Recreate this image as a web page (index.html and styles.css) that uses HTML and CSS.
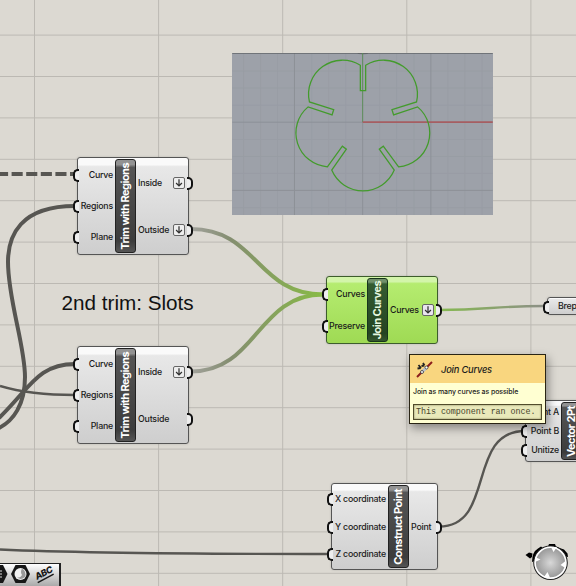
FILE: index.html
```html
<!DOCTYPE html>
<html lang="en">
<head>
<meta charset="utf-8">
<title>Join Curves</title>
<link rel="stylesheet" href="styles.css">
</head>
<body>
<main class="canvas">
  <svg class="layer" viewBox="0 0 576 586">
    <defs>
      <pattern id="grid" x="34" y="34.600" width="124.1" height="41.4" patternUnits="userSpaceOnUse">
        <path class="grid-line" d="M.5 0V41.4M0 .5H124.1"/>
      </pattern>
      <linearGradient id="toGreen"><stop offset="0" stop-color="#a2a29c"/><stop offset=".3" stop-color="#848e70"/><stop offset="1" stop-color="#88bb45"/></linearGradient>
      <linearGradient id="fromGreen"><stop offset="0" stop-color="#86b951"/><stop offset="1" stop-color="#8d8f87"/></linearGradient>
    </defs>
    <rect width="576" height="586" fill="url(#grid)"/>
    <g class="wires">
      <path class="thick dash" d="M-3 174H74"/>
      <path class="thick" d="M75 206C20 206 8 236 8 262C8 300 25 345 25 377C25 405 13 421 -1 428"/>
      <path class="thick" d="M75 364C38 364 30 388 -1 418"/>
      <path class="mid" d="M0 386Q30 395 75 395"/>
      <path class="thick" stroke="url(#toGreen)" d="M191 229C257 229 257 294.500 323 294.500"/>
      <path class="thick" stroke="url(#toGreen)" d="M191 371.500C257 371.500 257 294.500 323 294.500"/>
      <path class="mid" stroke="url(#fromGreen)" d="M439 310C490 310 492 306 545 306"/>
      <path class="mid" d="M439 526.500C496 526.500 466 431 525 431"/>
      <path class="mid" d="M0 549.500Q100 554 330 554"/>
    </g>
  </svg>

  <svg class="preview" viewBox="20 23 783 487">
    <path class="minor" d="M54 23V510M105 23V510M156 23V510M259 23V510M310 23V510M361 23V510M463 23V510M514 23V510M566 23V510M668 23V510M719 23V510M771 23V510M20 77H803M20 128H803M20 180H803M20 283H803M20 334H803M20 385H803M20 488H803"/>
    <path class="major" d="M207 23V510M412 231V510M617 23V510M20 231H412M20 436H803"/>
    <path class="edge" d="M20 23H803M386 21Q412 29 439 21"/>
    <path class="axis-y" d="M412 23V231"/>
    <path class="axis-x" d="M412 231H803"/>
    <path class="flower" d="M421 60A102 102 0 0 1 574 170L500 193L505 209L577 185A102 102 0 0 1 520 365L474 303L462 312L507 375A102 102 0 0 1 319 375L363 312L351 303L306 365A102 102 0 0 1 248 185L320 209L325 193L252 170A102 102 0 0 1 405 60V136H421Z"/>
  </svg>

  <h1 class="note">2nd trim: Slots</h1>

  <section class="node trim trim-a">
    <ul class="inputs"><li>Curve</li><li>Regions</li><li>Plane</li></ul>
    <div class="name"><b>Trim with Regions</b></div>
    <ul class="outputs">
      <li>Inside<svg class="down" viewBox="0 0 12 12"><path d="M6 1.500V9.500M2.500 6L6 9.500L9.500 6"/></svg></li>
      <li>Outside<svg class="down" viewBox="0 0 12 12"><path d="M6 1.500V9.500M2.500 6L6 9.500L9.500 6"/></svg></li>
    </ul>
  </section>

  <section class="node trim trim-b">
    <ul class="inputs"><li>Curve</li><li>Regions</li><li>Plane</li></ul>
    <div class="name"><b>Trim with Regions</b></div>
    <ul class="outputs">
      <li>Inside<svg class="down" viewBox="0 0 12 12"><path d="M6 1.500V9.500M2.500 6L6 9.500L9.500 6"/></svg></li>
      <li>Outside</li>
    </ul>
  </section>

  <section class="node join">
    <ul class="inputs"><li>Curves</li><li>Preserve</li></ul>
    <div class="name"><b>Join Curves</b></div>
    <ul class="outputs">
      <li>Curves<svg class="down" viewBox="0 0 12 12"><path d="M6 1.500V9.500M2.500 6L6 9.500L9.500 6"/></svg></li>
    </ul>
  </section>

  <section class="node construct">
    <ul class="inputs"><li>X coordinate</li><li>Y coordinate</li><li>Z coordinate</li></ul>
    <div class="name"><b>Construct Point</b></div>
    <ul class="outputs"><li>Point</li></ul>
  </section>

  <section class="node vector">
    <ul class="inputs"><li>Point A</li><li>Point B</li><li>Unitize</li></ul>
    <div class="name"><b>Vector 2Pt</b></div>
  </section>

  <section class="node brep"><ul class="inputs"><li>Brep</li></ul></section>

  <aside class="tooltip">
    <header>
      <svg class="tip-icon" viewBox="0 0 17 17">
        <path d="M1 16L16 1" stroke="#8c1c1c" stroke-width="2"/>
        <path d="M5.500 11.500L11 6" stroke="#b9c4ce" stroke-width="3"/>
        <circle cx="6" cy="11" r="1.500"/><circle cx="10.500" cy="6.500" r="1.500"/>
        <path d="M2.500 4L5 7M1.500 7.500L5 7M7 2L8.500 4.500M5.500 5L8.500 4.500" stroke="#222" stroke-width="1.800"/>
      </svg>
      <em>Join Curves</em>
    </header>
    <p>Join as many curves as possible</p>
    <code>This component ran once.</code>
  </aside>

  <footer class="toolbar">
    <svg viewBox="0 0 60 22">
      <path d="M-8 10L-4 1H3L7.500 10L3 19H-4Z" fill="#171717"/><path d="M0 7H2M0 10H2M0 13H2" stroke="#ddd"/>
      <path d="M11 10L15.500 1H25.500L30 10L25.500 19H15.500Z" fill="#171717"/>
      <circle cx="20.500" cy="10" r="6" fill="#f0f0f0"/><path d="M16.500 12.500Q20 15 22 11Q20 8 22 4.500Q27 8 25 13Q20 17 16.500 12.500Z" fill="#999"/>
      <g transform="rotate(-28 44 9)"><text class="abc" x="34.500" y="12">ABC</text><path d="M34 14.500H52" stroke="#171717" stroke-width="1.500"/></g>
    </svg>
  </footer>

  <svg class="dial" viewBox="0 0 52 44">
    <defs><radialGradient id="knob"><stop offset="0" stop-color="#d8d8d8"/><stop offset="1" stop-color="#919191"/></radialGradient></defs>
    <path d="M1.500 13L5 10.500L8.500 11.500L8 15L6 16.500Z"/>
    <path d="M8 20Q8 10 14 6.500L17 4.500L19 6L24 4.500L25 2L31 2L32 4.500L37 6.500L40 7.500L43.500 11.500L44 15L26 12Z"/>
    <circle cx="26.500" cy="20.700" r="16.700" fill="url(#knob)" stroke="#222" stroke-width="1.200"/>
    <circle cx="26.500" cy="20.700" r="15.400" fill="none" stroke="#fff" stroke-width="1.600"/>
    <path d="M27 5H33L29.500 10ZM41.500 19V26L36.500 23ZM20 35L23.500 30L26 35.500ZM11 15L16.500 17.500L11 20Z" fill="#fff"/>
  </svg>
</main>
</body>
</html>
```
FILE: styles.css
```css
* { box-sizing: border-box; }
body { margin: 0; font-family: Inter, "Liberation Sans", sans-serif; color: #1b1b1b; }
ul { list-style: none; margin: 0; padding: 0; }
.canvas { position: relative; width: 576px; height: 586px; overflow: hidden; background: #dcd9d2; }
.layer { position: absolute; left: 0; top: 0; width: 576px; height: 586px; }
.grid-line { stroke: #bcb9b3; stroke-width: 1; }
.wires path { fill: none; }
.wires path:not([stroke]) { stroke: #575652; }
.thick { stroke-width: 4; }
.mid { stroke-width: 2.4; }
.dash { stroke-dasharray: 11.1 3.5; }

.preview { position: absolute; left: 232px; top: 53px; width: 261px; height: 162px; background: #9da1a9; }
.preview path { fill: none; stroke-width: 3; }
.preview .minor { stroke: #999da5; }
.preview .major { stroke: #8d9198; }
.preview .edge { stroke: #62666a; stroke-width: 4; }
.preview .axis-y { stroke: #5c8c58; }
.preview .axis-x { stroke: #a65e62; stroke-width: 5; }
.preview .flower { stroke: #439b2c; stroke-width: 3.8; }

.note { position: absolute; left: 61.5px; top: 291px; margin: 0; font: 20.7px/24px "Liberation Sans", sans-serif; white-space: nowrap; color: #111; }

.node { position: absolute; display: flex; padding: 1px 3px; border: 1px solid #555; border-radius: 3px; background: linear-gradient(#fafafa 0 7%, #e8e8e8 9%, #cecece); box-shadow: 0 0 2px #77777766; font-size: 8.8px; font-weight: 500; line-height: 12px; }
.node ul { display: flex; flex-direction: column; }
.node li { position: relative; flex: 1; display: flex; align-items: center; white-space: nowrap; letter-spacing: -.2px; }
.inputs { flex: none; }
.inputs li { justify-content: flex-end; }
.outputs { flex: 1; padding-left: 2px; }
.outputs li { justify-content: space-between; }
.node li::before { content: ""; position: absolute; top: calc(50% - 6px); width: 4px; height: 9px; border: 2px solid #111; background: #eee; }
.node .inputs li::before { left: -8px; border-right: 0; border-radius: 5px 0 0 5px; }
.node .outputs li::before { right: -8px; border-left: 0; border-radius: 0 5px 5px 0; }
.name { display: flex; align-items: center; justify-content: center; flex: none; width: 21px; margin-left: 2px; border: 1px solid #222; border-radius: 3px; background: linear-gradient(#929292 0 5%, #555 8%, #3c3c3c 88%, #555); color: #fff; overflow: hidden; }
.name b { writing-mode: vertical-rl; transform: rotate(180deg); font-size: 11px; line-height: 19px; font-weight: 700; letter-spacing: -.55px; white-space: nowrap; }
.down { flex: none; width: 12px; height: 12px; border: 1px solid #666; border-radius: 2px; background: #eee; fill: none; stroke: #333; stroke-width: 1.5; }

.trim { left: 77px; width: 112px; height: 98px; }
.trim .inputs { width: 32px; }
.trim-a { top: 157px; }
.trim-b { top: 346px; }
.join { left: 326px; top: 276px; width: 112px; height: 68px; border-color: #3d5d2c; background: linear-gradient(#d3f5aa 0 7%, #b5ec70 10%, #9fda54); }
.join .inputs { width: 35px; }
.join .name { background: linear-gradient(#71906b 0 5%, #345c31 8%, #244422 88%, #35562e); border-color: #17351b; color: #e5f7df; }
.join .down { background: #e9e4ef; }
.construct { left: 331px; top: 483px; width: 107px; height: 87px; }
.construct .inputs { width: 51px; }
.vector { left: 525px; top: 400px; width: 90px; height: 62px; }
.vector .inputs { width: 30px; }
.brep { left: 547px; top: 297px; width: 60px; height: 18px; }
.brep .inputs { padding-left: 7px; }
.node.brep .inputs li::before { left: -15px; top: calc(50% - 5px); }

.tooltip { position: absolute; left: 409px; top: 354px; width: 137px; height: 70px; display: flex; flex-direction: column; border: 1px solid #292414; background: #ffffd2; box-shadow: 2px 4px 9px #0006; }
.tooltip header { display: flex; align-items: center; height: 28px; flex: none; padding-left: 6px; gap: 8px; background: #f9d67f; }
.tooltip em { font-size: 9.3px; font-weight: 500; letter-spacing: -.2px; }
.tip-icon { width: 17px; height: 17px; fill: #fff; stroke: #222; stroke-width: .7; }
.tooltip p { margin: 4px 3px 0; font-size: 7px; line-height: 10px; font-weight: 500; letter-spacing: -.1px; white-space: nowrap; }
.tooltip code { margin: 7px 3px 0; height: 16px; padding-left: 2px; border: 1px solid #514c2b; box-shadow: inset 0 0 2px #77744c; background: #e9e9ba; font: 8.4px/14px "Liberation Mono", monospace; letter-spacing: -.05px; white-space: nowrap; color: #48472e; }

.toolbar { position: absolute; left: 0; top: 563px; width: 61px; height: 23px; border-top: 1px solid #222; border-right: 2px solid #222; background: linear-gradient(#fff, #aaa); }
.toolbar svg { display: block; width: 60px; height: 22px; }
.abc { font: italic 800 9px Inter, sans-serif; fill: #171717; letter-spacing: -.4px; }
.dial { position: absolute; left: 524px; top: 542px; width: 52px; height: 44px; }
```
